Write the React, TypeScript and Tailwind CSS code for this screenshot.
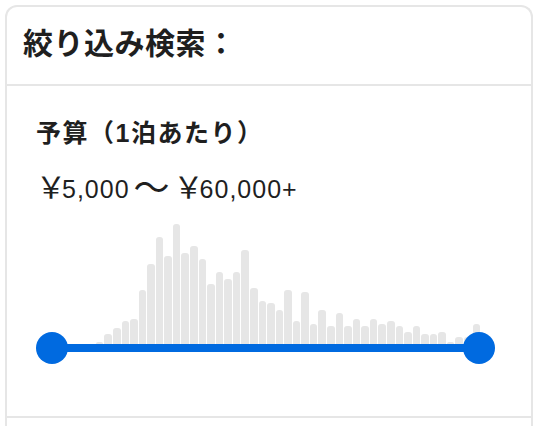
const bars = [
  0, 0, 0, 0, 0, 2, 10, 16, 23, 25, 54, 80, 107, 88, 120, 91, 98, 85, 60, 72,
  65, 72, 94, 56, 43, 41, 34, 54, 23, 52, 20, 34, 18, 31, 18, 25, 18, 25, 20, 23,
  18, 12, 18, 10, 10, 12, 2, 7, 7, 20,
];

function PriceSlider() {
  return (
    <div className="mt-[18px]">
      <div className="flex h-[120px] items-end gap-px pl-[17px] pr-[15px]">
        {bars.map((h, i) => (
          <div
            key={i}
            className="flex-1 rounded-t-[3px] bg-[#e6e6e6]"
            style={{ height: h }}
          />
        ))}
      </div>
      <div className="relative h-2">
        <div className="absolute inset-y-0 left-4 right-4 bg-[#006ae0]" />
        <span className="absolute left-0 top-[-12px] h-8 w-8 rounded-full bg-[#006ae0]" />
        <span className="absolute right-0 top-[-12px] h-8 w-8 rounded-full bg-[#006ae0]" />
      </div>
    </div>
  );
}

export default function App() {
  return (
    <div
      className="min-h-[426px] bg-white pl-[5px] pr-[7px] pt-[5px] text-[#1f1f1f]"
      style={{ fontFamily: '"Liberation Sans", "Noto Sans CJK JP", sans-serif' }}
    >
      <div className="overflow-hidden rounded-t-xl border-2 border-b-0 border-[#e6e6e6]">
        <div className="flex h-[79px] items-center border-b-2 border-[#e6e6e6] px-4 pb-[3px]">
          <h2 className="text-[30px] font-bold leading-[42px] tracking-[0.5px]">絞り込み検索：</h2>
        </div>
        <div className="border-b-2 border-[#e6e6e6] pb-[64px] pl-[29px] pr-[36px] pt-[31px]">
          <h3 className="text-[25px] font-bold leading-[33px] tracking-[1.5px]">予算（1泊あたり）</h3>
          <p className="mt-[21px] text-[25px] leading-[33px] tracking-[1px]">
            <span className="text-[30px] tracking-[-4px]">￥</span>5,000
            <span className="mx-[4px] align-[-3px] text-[36px] tracking-normal">〜</span>
            <span className="text-[30px] tracking-[-4px]">￥</span>60,000+
          </p>
          <PriceSlider />
        </div>
        <div className="h-[40px]" />
      </div>
    </div>
  );
}
